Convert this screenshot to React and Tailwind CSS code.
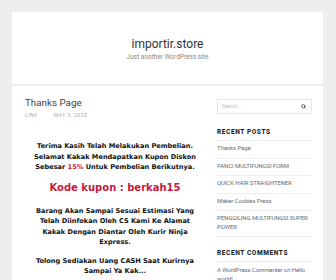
import { Search } from 'lucide-react';

const recentPosts = [
  'Thanks Page',
  'PANCI MULTIFUNGSI FORM',
  'QUICK HAIR STRAIGHTENER',
  'Maker Cookies Press',
  'PENGGILING MULTIFUNGSI SUPER POWER',
];

function WidgetTitle({ children }) {
  return (
    <h3 className="text-[6.5px] leading-[8px] font-extrabold tracking-[0.6px] text-[#222] pb-[4px] border-b border-[#eeeeee]">
      {children}
    </h3>
  );
}

function Sidebar() {
  return (
    <aside className="w-[95px] pt-[13px] font-['Roboto',sans-serif]">
      <div className="h-[15px] border border-[#e8e8e8] flex items-center justify-between pl-[4px] pr-[5px]">
        <span className="text-[5px] text-[#bbbbbb]">Search...</span>
        <Search className="w-[5px] h-[5px] text-[#333]" strokeWidth={3.5} />
      </div>

      <div className="mt-[14px]">
        <WidgetTitle>RECENT POSTS</WidgetTitle>
        <ul>
          {recentPosts.map((post) => (
            <li
              key={post}
              className="pt-[3px] pb-[5px] border-b border-[#eeeeee] text-[6px] leading-[8.5px] text-[#5f6d7c] tracking-[-0.1px]"
            >
              {post}
            </li>
          ))}
        </ul>
      </div>

      <div className="mt-[12px]">
        <WidgetTitle>RECENT COMMENTS</WidgetTitle>
        <p className="pt-[3px] text-[6px] leading-[9px] text-[#5f6d7c] tracking-[-0.1px]">
          A WordPress Commenter on Hello world!
        </p>
      </div>
    </aside>
  );
}

function Post() {
  return (
    <article className="w-[180px]">
      <h2 className="pt-[11px] font-['Roboto',sans-serif] text-[9.8px] leading-[12px] text-[#444]">
        Thanks Page
      </h2>
      <div className="mt-[3px] flex gap-[16px] font-['Roboto',sans-serif] text-[5px] leading-[6px] tracking-[0.5px] text-[#aaaaaa]">
        <span>LINK</span>
        <span>MAY 9, 2020</span>
      </div>

      <div className="font-['DejaVu_Sans',sans-serif] font-bold text-center text-[#111]">
        <p className="mt-[23px] text-[6.6px] leading-[10.5px]">
          Terima Kasih Telah Melakukan Pembelian.
          <br />
          Selamat Kakak Mendapatkan Kupon Diskon
          <br />
          Sebesar <span className="text-[#c8193a]">15%</span> Untuk Pembelian Berikutnya.
        </p>
        <p className="mt-[8px] text-[10px] leading-[14px] text-[#c8193a]">Kode kupon : berkah15</p>
        <p className="mt-[11px] text-[6.6px] leading-[10.5px]">
          Barang Akan Sampai Sesuai Estimasi Yang
          <br />
          Telah Diinfokan Oleh CS Kami Ke Alamat
          <br />
          Kakak Dengan Diantar Oleh Kurir Ninja
          <br />
          Express.
        </p>
        <p className="mt-[8px] text-[6.6px] leading-[10.5px]">
          Tolong Sediakan Uang CASH Saat Kurirnya
          <br />
          Sampai Ya Kak...
        </p>
      </div>
    </article>
  );
}

export default function App() {
  return (
    <div className="w-[336px] h-[280px] overflow-hidden bg-[#eeeeee] pt-[12px] pl-[12px]">
      <div className="w-[311px]">
        <header className="h-[72px] bg-white pt-[25px] text-center font-['Roboto',sans-serif]">
          <h1 className="text-[12px] leading-[14px] text-[#333]">importir.store</h1>
          <p className="mt-[1px] text-[6.5px] leading-[10px] text-[#888]">Just another WordPress site</p>
        </header>
        <main className="mt-[2px] h-[300px] bg-white flex pl-[13px] gap-[12px]">
          <Post />
          <Sidebar />
        </main>
      </div>
    </div>
  );
}
